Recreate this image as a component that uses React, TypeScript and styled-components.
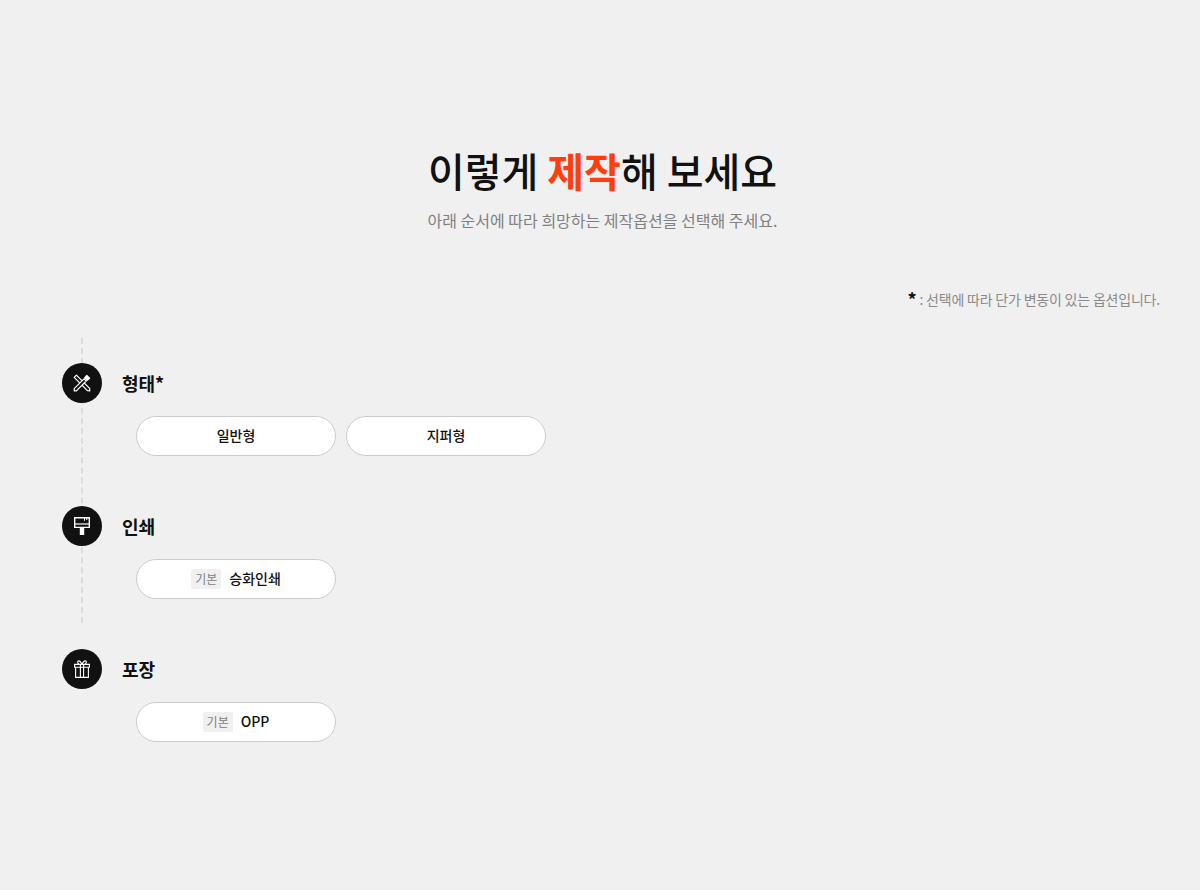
import React from "react";
import styled, { createGlobalStyle } from "styled-components";

const Global = createGlobalStyle`
  html, body { margin: 0; padding: 0; background: #f0f0f0; }
  body { font-family: "Noto Sans CJK KR", "Noto Sans", sans-serif; color: #111; }
  * { box-sizing: border-box; }
`;

const Page = styled.main`
  width: 1200px;
  height: 890px;
  padding: 142px 40px 0 62px;
  overflow: hidden;
`;

const Header = styled.header`
  display: flex;
  flex-direction: column;
  align-items: center;
  margin-left: -57px;
  margin-right: -40px;
`;

const Title = styled.h1`
  margin: 0;
  font-size: 40px;
  line-height: 56px;
  font-weight: 500;
  color: #111;
`;

const Accent = styled.b`
  font-weight: 700;
  color: #ff3d0d;
`;

const Subtitle = styled.p`
  margin: 10px 0 0;
  font-size: 16px;
  line-height: 24px;
  color: #808080;
`;

const Note = styled.p`
  margin: 55px 0 0;
  text-align: right;
  font-size: 14px;
  line-height: 24px;
  letter-spacing: -0.2px;
  color: #8a8a8a;
`;

const Star = styled.span`
  color: #111;
  font-size: 18px;
  line-height: 24px;
  font-weight: 700;
  vertical-align: -2px;
`;

const Steps = styled.ol`
  position: relative;
  list-style: none;
  margin: 27px 0 0;
  padding: 25px 0 0;
  display: flex;
  flex-direction: column;
  gap: 50px;

  &::before {
    content: "";
    position: absolute;
    left: 19px;
    top: 0;
    height: 285px;
    border-left: 2px dashed #dcdcdc;
  }
`;

const Step = styled.li`
  position: relative;
  display: flex;
  flex-direction: column;
`;

const StepHead = styled.div`
  display: flex;
  align-items: center;
  gap: 20px;
  height: 40px;
`;

const IconCircle = styled.span`
  position: relative;
  width: 40px;
  height: 40px;
  border-radius: 50%;
  background: #111;
  color: #fff;
  display: flex;
  align-items: center;
  justify-content: center;
  flex: none;
`;

const StepTitle = styled.h2`
  margin: 0;
  font-size: 18px;
  line-height: 24px;
  font-weight: 700;
  color: #111;
`;

const Options = styled.div`
  display: flex;
  gap: 10px;
  margin: 13px 0 0 74px;
`;

const Option = styled.button`
  width: 200px;
  height: 40px;
  padding: 0 0 2px;
  border: 1px solid #cccccc;
  border-radius: 20px;
  background: #fff;
  color: #111;
  display: flex;
  align-items: center;
  justify-content: center;
  gap: 8px;
  font-family: inherit;
  font-size: 14px;
  font-weight: 500;
  line-height: 20px;
`;

const Tag = styled.span`
  padding: 0 4px;
  height: 20px;
  border-radius: 2px;
  background: #f0f0f0;
  color: #808080;
  font-size: 12px;
  font-weight: 400;
  line-height: 20px;
  margin-top: 2px;
`;

const ToolsIcon = () => (
  <svg width="18" height="18" viewBox="0 0 18 18" fill="none" stroke="currentColor" strokeWidth="1.2" strokeLinejoin="round">
    <path d="M1.2 3.4 3.4 1.2 16.6 14.4 16.8 16.8 14.4 16.6Z" />
    <path d="M1.2 14.6 11 4.8 13.2 7 3.4 16.8 1.2 16.8Z" fill="#111" />
    <path d="M11.6 3.8 13.8 1.4 16.6 4.2 14.2 6.4Z" fill="currentColor" />
  </svg>
);

const BrushIcon = () => (
  <svg width="16" height="18" viewBox="0 0 16 18" fill="none">
    <path d="M.7.7H15.3V10.4H.7Z" stroke="currentColor" strokeWidth="1.4" />
    <path d="M.7 7H15.3" stroke="currentColor" strokeWidth="1.2" />
    <path d="M10.5 1V3.8M12.8 1V3" stroke="currentColor" strokeWidth="1" />
    <path d="M5.8 11H10.2V18H5.8Z" fill="currentColor" />
  </svg>
);

const GiftIcon = () => (
  <svg width="16" height="18" viewBox="0 0 16 18" fill="none" stroke="currentColor" strokeWidth="1.1">
    <path d="M.6 4.4H15.4V7.2H.6Z" />
    <path d="M1.6 7.2V17.4H14.4V7.2" />
    <path d="M6.4 4.4V17.4M9.6 4.4V17.4" />
    <path d="M8 4.4C6.8 1.8 5.4.4 4.2 1 3.2 1.6 3.7 3.6 5.2 4.4M8 4.4C9.2 1.8 10.6.4 11.8 1 12.8 1.6 12.3 3.6 10.8 4.4" />
  </svg>
);

const steps = [
  { icon: <ToolsIcon />, title: "형태*", options: [{ label: "일반형" }, { label: "지퍼형" }] },
  { icon: <BrushIcon />, title: "인쇄", options: [{ label: "승화인쇄", tag: "기본" }] },
  { icon: <GiftIcon />, title: "포장", options: [{ label: "OPP", tag: "기본" }] },
];

export default function App() {
  return (
    <Page>
      <Global />
      <Header>
        <Title>
          이렇게 <Accent>제작</Accent>해 보세요
        </Title>
        <Subtitle>아래 순서에 따라 희망하는 제작옵션을 선택해 주세요.</Subtitle>
      </Header>
      <Note>
        <Star>*</Star> : 선택에 따라 단가 변동이 있는 옵션입니다.
      </Note>
      <Steps>
        {steps.map((s) => (
          <Step key={s.title}>
            <StepHead>
              <IconCircle>{s.icon}</IconCircle>
              <StepTitle>{s.title}</StepTitle>
            </StepHead>
            <Options>
              {s.options.map((o: { label: string; tag?: string }) => (
                <Option key={o.label}>
                  {o.tag && <Tag>{o.tag}</Tag>}
                  {o.label}
                </Option>
              ))}
            </Options>
          </Step>
        ))}
      </Steps>
    </Page>
  );
}
